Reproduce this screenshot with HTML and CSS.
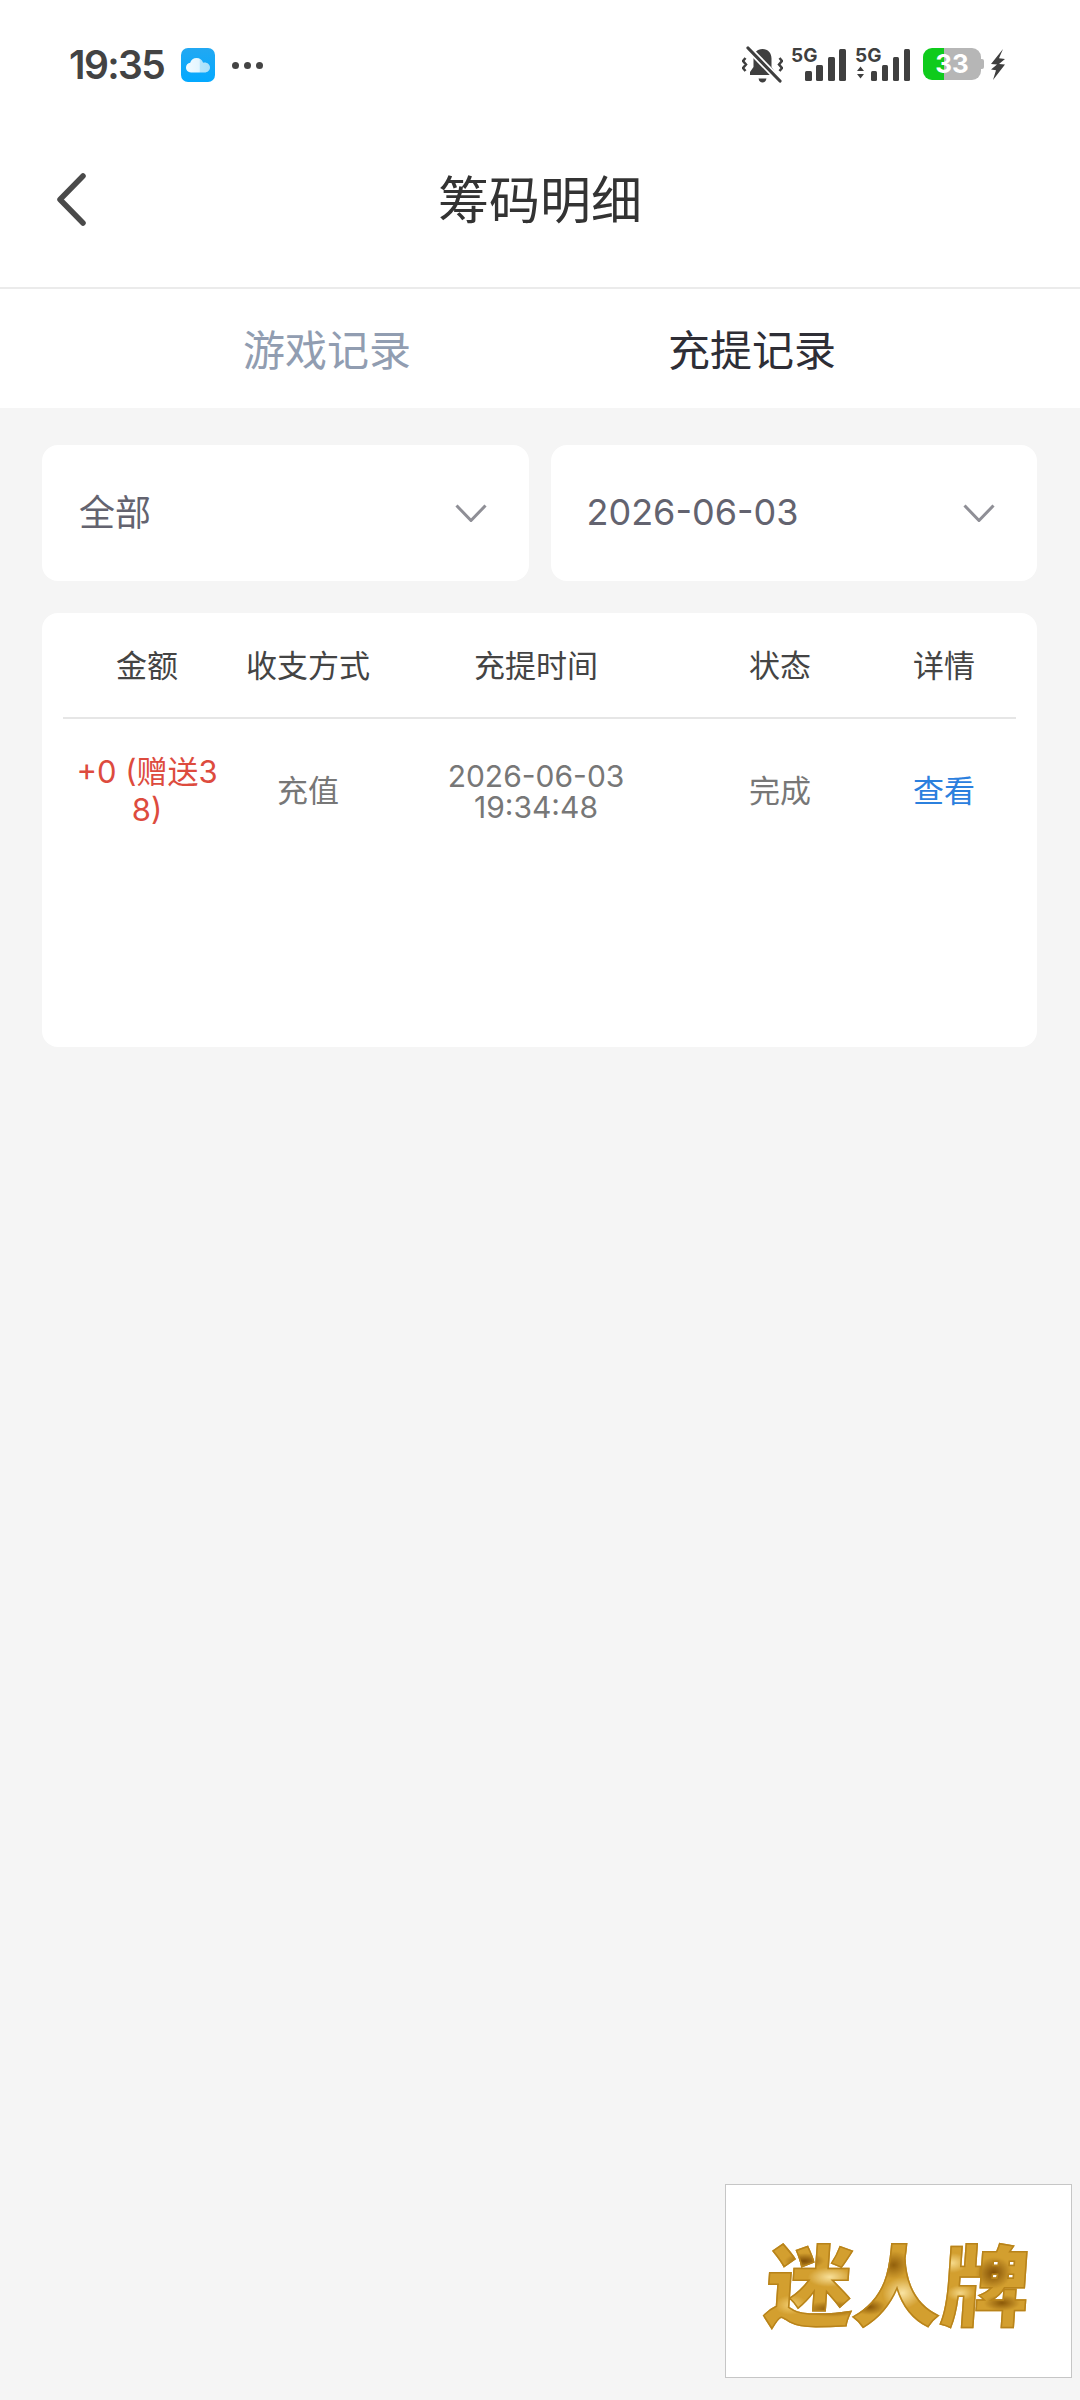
FILE: index.html
```html
<!DOCTYPE html>
<html lang="zh-CN">
<head>
<meta charset="utf-8">
<title>筹码明细</title>
<link rel="stylesheet" href="styles.css">
</head>
<body>
<div class="app">
  <div class="status">
    <div class="status-left">
      <span class="clock">19:35</span>
      <svg class="cloud-app" viewBox="0 0 34 34">
        <defs>
          <linearGradient id="skyFill" x1="0" y1="0" x2="0" y2="1">
            <stop offset="0" stop-color="#22a8f2"/>
            <stop offset="1" stop-color="#03a9ff"/>
          </linearGradient>
          <linearGradient id="cloudFill" x1="0" y1="0" x2="1" y2="0">
            <stop offset="0" stop-color="#f2fbff"/>
            <stop offset="0.55" stop-color="#e4f6ff"/>
            <stop offset="0.6" stop-color="#b5e5fb"/>
            <stop offset="1" stop-color="#a8e0fa"/>
          </linearGradient>
        </defs>
        <rect width="34" height="34" rx="7" fill="url(#skyFill)"/>
        <path d="M10 24.500c-3 0-5-2.200-5-4.900 0-2.500 1.800-4.500 4.200-4.800C10 11.800 12.500 10 15.500 10c3.200 0 5.800 2 6.600 4.800 0.500-0.200 1-0.300 1.500-0.300 3 0 5.400 2.300 5.400 5 0 2.800-2.400 5-5.400 5z" fill="url(#cloudFill)"/>
      </svg>
      <span class="dots"><i></i><i></i><i></i></span>
    </div>
    <div class="status-right">
      <svg class="bell" viewBox="0 0 41 38">
        <path d="M20.500 3c-5.500 0-9 4-9 9.500v8.500l-3.500 5v3h25v-3l-3.500-5v-8.500C29.500 7 26 3 20.500 3z" fill="#3f3f3f"/>
        <path d="M16.500 32.500h8c-.5 2.700-2 4-4 4s-3.500-1.300-4-4z" fill="#3f3f3f"/>
        <path d="M6 2l32 33" stroke="#fff" stroke-width="6.500"/>
        <path d="M6 2l32 33" stroke="#3f3f3f" stroke-width="3.200" stroke-linecap="round"/>
        <path d="M3.500 12l-2.500 3 3 3.500-3 3.500 2.500 3M37.500 12l2.500 3-3 3.500 3 3.500-2.500 3" fill="none" stroke="#3f3f3f" stroke-width="2.500"/>
      </svg>
      <div class="signal">
        <span class="net">5G</span>
        <span class="bars"><i class="b1"></i><i class="b2"></i><i class="b3"></i><i class="b4"></i></span>
      </div>
      <div class="signal signal-data">
        <span class="net">5G</span>
        <svg class="updown" viewBox="0 0 7 12"><path d="M3.500 0L7 4.500H0zM3.500 12L0 7.500h7z" fill="#3f3f3f"/></svg>
        <span class="bars"><i class="b1"></i><i class="b2"></i><i class="b3"></i><i class="b4"></i></span>
      </div>
      <div class="battery"><span class="level">33</span></div>
      <svg class="bolt" viewBox="0 0 16 31">
        <path d="M13 0L1 15l6 .5L1 20.500l5 .8L3 31l12-15.500-6-.5 6-5-6-.8z" fill="#3f3f3f"/>
      </svg>
    </div>
  </div>

  <header class="topbar">
    <svg class="back" viewBox="0 0 32 53"><path d="M28 3L5 26.500 28 50" fill="none" stroke="#4a4a4a" stroke-width="5.500" stroke-linecap="round" stroke-linejoin="round"/></svg>
    <h1 class="title">筹码明细</h1>
  </header>

  <nav class="tabs">
    <span class="tab tab-muted">游戏记录</span>
    <span class="tab tab-active">充提记录</span>
  </nav>

  <main class="content">
    <div class="filters">
      <div class="select">
        <span class="select-cjk">全部</span>
        <svg class="chev" viewBox="0 0 32 18"><path d="M1.500 1.500L16 16.500 30.500 1.500" fill="none" stroke="#8f8f96" stroke-width="3"/></svg>
      </div>
      <div class="select">
        <span class="select-date">2026-06-03</span>
        <svg class="chev" viewBox="0 0 32 18"><path d="M1.500 1.500L16 16.500 30.500 1.500" fill="none" stroke="#8f8f96" stroke-width="3"/></svg>
      </div>
    </div>

    <section class="records">
      <div class="grid grid-head">
        <span>金额</span><span>收支方式</span><span>充提时间</span><span>状态</span><span class="col-end">详情</span>
      </div>
      <div class="grid grid-row">
        <span class="amount">+0 (赠送38)</span>
        <span>充值</span>
        <span class="when">2026-06-03<br>19:34:48</span>
        <span>完成</span>
        <a class="link col-end">查看</a>
      </div>
    </section>
  </main>

  <aside class="brand"><span class="brand-name">迷人牌</span></aside>
</div>
</body>
</html>
```

FILE: styles.css
```css
* { box-sizing: border-box; }

html, body { margin: 0; padding: 0; }

body {
  font-family: "Inter", "Noto Sans CJK SC", sans-serif;
  background: #f5f5f5;
}

.app {
  position: relative;
  width: 1080px;
  height: 2400px;
  display: flex;
  flex-direction: column;
  overflow: hidden;
}

/* status bar */
.status {
  height: 90px;
  background: #fff;
  display: flex;
  justify-content: space-between;
  align-items: flex-start;
  padding: 45px 74px 0 69px;
}

.status-left { display: flex; align-items: center; }

.clock {
  font-size: 39px;
  font-weight: 600;
  line-height: 40px;
  color: #434343;
  letter-spacing: -1.6px;
  width: 112px;
}

.cloud-app { width: 34px; height: 34px; }

.dots { display: flex; gap: 5px; margin-left: 17px; }
.dots i { width: 7px; height: 7px; border-radius: 50%; background: #444; }

.status-right { display: flex; align-items: flex-start; }

.bell { width: 41px; height: 38px; margin-top: 1px; }

.signal { position: relative; width: 55px; height: 34px; margin-left: 8px; margin-top: 2px; }
.signal-data { margin-left: 9px; width: 55px; }

.net {
  position: absolute;
  left: 0;
  top: 0;
  font-size: 19px;
  line-height: 18px;
  font-weight: 700;
  color: #3f3f3f;
}

.updown { position: absolute; left: 2px; top: 19px; width: 7px; height: 13px; }

.bars { position: absolute; right: 0; bottom: 0; display: flex; gap: 4.500px; align-items: flex-end; }
.bars i { display: block; width: 7px; background: #3f3f3f; border-radius: 1.500px; }
.signal-data .bars i { width: 6.500px; }
.bars .b1 { height: 10px; }
.bars .b2 { height: 16px; }
.bars .b3 { height: 24px; }
.bars .b4 { height: 32px; }

.battery {
  position: relative;
  width: 58px;
  height: 32px;
  margin-left: 13px;
  margin-top: 3px;
  border-radius: 9px;
  background: linear-gradient(90deg, #0fcb1c 0 36%, #b6b6b6 36% 100%);
  display: flex;
  align-items: center;
  justify-content: center;
}

.battery::after {
  content: "";
  position: absolute;
  right: -3px;
  top: 11px;
  width: 3px;
  height: 10px;
  border-radius: 0 2px 2px 0;
  background: #b6b6b6;
}

.level {
  font-size: 26px;
  font-weight: 700;
  line-height: 32px;
  color: #fff;
}

.bolt { width: 16px; height: 31px; margin-left: 9px; margin-top: 4px; }

/* title bar */
.topbar {
  position: relative;
  height: 199px;
  padding-top: 24px;
  background: #fff;
  border-bottom: 2px solid #ebebeb;
  display: flex;
  align-items: center;
  justify-content: center;
}

.back { position: absolute; left: 55px; top: 83px; width: 32px; height: 53px; }

.title {
  margin: 0;
  font-size: 51px;
  font-weight: 400;
  line-height: 60px;
  color: #333;
}

/* tab strip */
.tabs {
  height: 119px;
  padding-top: 5px;
  background: #fff;
  display: grid;
  grid-template-columns: 327px 425px;
  justify-content: start;
  align-items: center;
}

.tab {
  justify-self: end;
  transform: translateX(50%);
  font-size: 42px;
  line-height: 50px;
}

.tab-muted { color: #919db1; }
.tab-active { color: #2e2e36; }

/* filters and table */
.content { padding: 37px 43px 0 42px; }

.filters { display: grid; grid-template-columns: 1fr 1fr; gap: 22px; }

.select {
  height: 136px;
  background: #fff;
  border-radius: 16px;
  padding: 0 42px 0 37px;
  display: flex;
  align-items: center;
  justify-content: space-between;
  font-size: 36px;
  color: #63636f;
}

.select-cjk { padding-bottom: 6px; }
.select-date { padding-bottom: 2px; margin-left: -1px; }

.chev { width: 32px; height: 18px; }

.records {
  margin-top: 32px;
  height: 434px;
  background: #fff;
  border-radius: 16px;
  padding: 0 21px;
}

.grid {
  display: grid;
  grid-template-columns: 168px 154px 302px 186px 144px;
  align-items: center;
  text-align: center;
  font-size: 31px;
}

.grid-head {
  height: 106px;
  padding-top: 2px;
  border-bottom: 2px solid #e6e6e6;
  color: #444;
  line-height: 40px;
}

.grid-row {
  height: 144px;
  color: #777;
  line-height: 38px;
}

.amount {
  padding: 0 12px;
  color: #dd4b3e;
  word-break: break-all;
}

.when { font-size: 30px; line-height: 31px; padding-top: 2px; }

.col-end { margin-left: -2px; }

.link { color: #2b80de; }

/* floating brand tile */
.brand {
  position: absolute;
  left: 725px;
  top: 2184px;
  width: 347px;
  height: 194px;
  background: #fff;
  border: 1px solid #c6c6c6;
  display: flex;
  align-items: center;
  justify-content: center;
}

.brand-name {
  font-family: "Noto Sans CJK SC", sans-serif;
  font-size: 88px;
  font-weight: 900;
  line-height: 100px;
  transform: skewX(-4deg);
  color: transparent;
  -webkit-text-stroke: 1.500px #b8831a;
  background:
    radial-gradient(ellipse 20px 8px at 14% 30%, rgba(120, 70, 0, .9), transparent),
    radial-gradient(ellipse 22px 10px at 24% 46%, rgba(250, 228, 160, .95), transparent),
    radial-gradient(ellipse 16px 10px at 10% 74%, rgba(245, 210, 120, .9), transparent),
    radial-gradient(ellipse 30px 8px at 26% 78%, rgba(125, 75, 0, .9), transparent),
    radial-gradient(ellipse 16px 14px at 48% 34%, rgba(125, 75, 0, .75), transparent),
    radial-gradient(ellipse 20px 16px at 52% 62%, rgba(252, 232, 170, .95), transparent),
    radial-gradient(ellipse 16px 8px at 40% 76%, rgba(125, 75, 0, .85), transparent),
    radial-gradient(ellipse 16px 10px at 70% 32%, rgba(250, 225, 150, .9), transparent),
    radial-gradient(ellipse 18px 16px at 86% 42%, rgba(120, 70, 0, .9), transparent),
    radial-gradient(ellipse 14px 8px at 74% 62%, rgba(250, 225, 150, .85), transparent),
    radial-gradient(ellipse 18px 8px at 90% 72%, rgba(125, 75, 0, .85), transparent),
    #d39f2f;
  -webkit-background-clip: text;
  background-clip: text;
}
```
